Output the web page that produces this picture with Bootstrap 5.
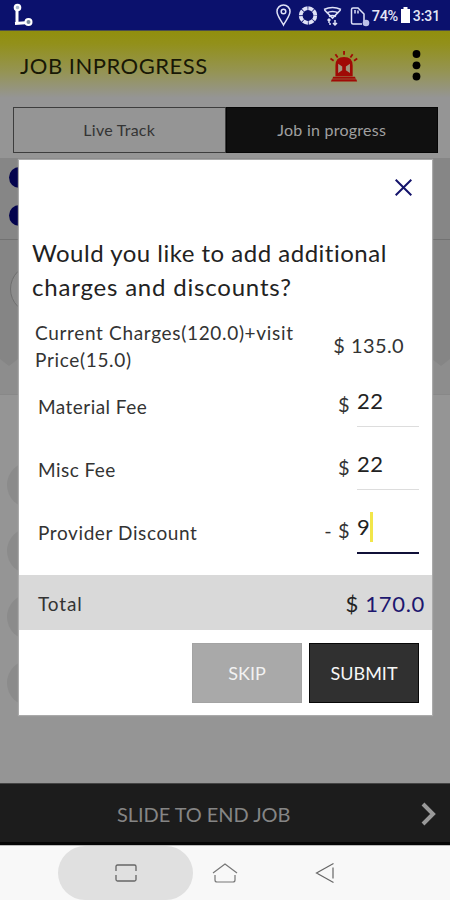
<!DOCTYPE html>
<html lang="en">
<head>
<meta charset="utf-8">
<meta name="viewport" content="width=device-width, initial-scale=1">
<title>Job in progress</title>
<link href="https://cdn.jsdelivr.net/npm/bootstrap@5.3.0/dist/css/bootstrap.min.css" rel="stylesheet">
<style>
body{font-family:Lato,"Open Sans",sans-serif;background:#959595;color:#222;width:450px;height:900px;overflow:hidden}
svg{display:block;flex:none}
.status{height:31px;background:#0b116d;border-bottom:1px solid #4b4d4c;font:500 14px/31px Roboto,sans-serif;color:#e4e6f6;padding:0 10px 0 11px}
.pct{width:29px;font-size:14.5px;letter-spacing:-.4px;padding-top:2px}
.clock{margin-left:3px;letter-spacing:-.1px;padding-top:2px}
.topbar{height:69px;background:linear-gradient(#918f0d 0,#92901a 18%,#959455 60%,#959595 97%);padding:0 29px 0 20px}
.page-title{font-size:22px;line-height:30px;color:#181806;letter-spacing:.5px;padding-top:1px}
.siren{margin:1px 53px 0 0}
.tabs{height:58px;padding:7px 12px 5px 13px}
.tab-item{height:46px;width:213px;border:1px solid #3d3d3d;font-size:16px;line-height:44px;text-align:center;color:#343434;letter-spacing:.25px}
.tab-item.on{background:#101010;border-color:#050505;color:#a0a0a0}
.strip{height:82px;background:#868686;border-bottom:1px solid #727272;padding:9px 0 0 9px;gap:17px}
.dot{width:21px;height:21px;border-radius:50%;background:#03034d}
.map-area{height:155px;background:#858585;border-bottom:1px solid #888}
.ring{width:50px;height:50px;border:1px solid #6f6f6f;border-radius:50%;background:#8c8c8c;margin:24px 0 0 10px}
.steps{height:388px;padding:67px 0 0 7px;gap:20px}
.step-dot{width:46px;height:46px;border-radius:50%;background:#8b8b8b}
.slide{height:62px;background:#1c1c1c;border-top:1px solid #444;border-bottom:3px solid #050505;color:#858585;font-size:20px;padding:2px 13px 0 117px}
.slide-text{letter-spacing:-.05px}
.navkeys{height:55px;background:#f8f8f8;padding-left:58px;border-top:1px solid #bbb}
.recent{width:135px;height:54px;border-radius:27px;background:#e0e0e0}
.home{margin-left:19px}
.back{margin-left:77px}
.sheet{position:absolute;left:19px;top:160px;width:413px;height:555px;background:#fff;box-shadow:0 0 1px 1px #aaa}
.sheet-head{height:73px;padding:19px 20px 0 0}
.question{font-size:24px;line-height:34px;padding:3px 0 0 13px;letter-spacing:.5px;color:#222;height:79px}
.q2{letter-spacing:.8px}
.lbl{font-size:19px;color:#333;letter-spacing:.45px}
.charge{height:63px;padding:5px 13px 0 19px}
.charge.first{height:64px;padding:7px 28px 0 16px;line-height:27px}
.charge.last{height:73px}
.charge>.lbl{padding-top:12px}
.charge.first>.lbl{padding-top:0}
.c1{letter-spacing:.67px}
.l3{letter-spacing:.6px}
.l4{letter-spacing:.9px;padding-top:1px}
.amt{font-size:20px;color:#333}
.a1{padding-top:13px;letter-spacing:.4px}
.cur{padding:8px 7px 0 0;letter-spacing:.5px}
.field{width:62px;height:47px;border-bottom:1px solid #ddd;font-size:22px;line-height:42px;color:#222;letter-spacing:.5px;margin-top:-1px}
.field.focus{height:48px;border-bottom:2px solid #101038}
.caret{width:3px;height:30px;background:#f2e64a;margin-top:6px}
.total{height:55px;background:#d9d9d9;padding:2px 7px 0 19px}
.sum{font-size:22px;letter-spacing:.7px;color:#222}
.navy{color:#1d176f}
.acts{padding:13px 13px 0 0;gap:7px}
.acts .btn{width:110px;height:60px;border-radius:0;font-size:18px;padding:0}
.skip{background:#a9a9a9!important;border:1px solid #a3a3a3;color:#f2f2f2!important}
.send{background:#303030!important;border:1px solid #080808;color:#f6f6f6!important}
</style>
<script src="https://cdn.jsdelivr.net/npm/bootstrap@5.3.0/dist/js/bootstrap.bundle.min.js"></script>
</head>
<body class="position-relative d-flex flex-column">
<div class="status d-flex align-items-center justify-content-between">
 <svg width="24" height="24" viewBox="0 0 24 24" fill="none" stroke="#fff"><path d="M6 5v15M4 20.500 18 19.500" stroke-width="3"/><circle cx="6.500" cy="4.500" r="2.800" fill="#abc" stroke-width="2"/><circle cx="17.500" cy="19" r="3" fill="#789" stroke-width="2"/></svg>
 <div class="d-flex align-items-center">
  <svg width="97" height="26" viewBox="0 0 97 26" fill="none" stroke="#dfe2f7" stroke-width="1.500"><path d="M8.500 23C6 18 2 14 2 9.500a6.500 6.500 0 0 1 13 0C15 14 11 18 8.500 23Z"/><circle cx="8.500" cy="9.500" r="2.300"/><circle cx="33" cy="13.500" r="7.300" stroke-width="3.800" stroke-dasharray="5 .75"/><path d="M49 7.500q8.500-4 17 0M51.500 11q6-3 12 0M54 14.500q3.500-2 7 0M49.500 8l8 8 8-8" stroke-width="1.600"/><path d="M54 17v4m-1.500-2.500L54 17l1.500 1.500M60 18v5m-2-2 2 2 2-2M54 22h2" stroke-width="1.500"/><path d="M89 19v-7l-6-6h-5q-1.500 0-1.500 1.500v13q0 1.500 1.500 1.500H87M80 8v3.500m3-3V11.500"/><circle cx="91" cy="21" r="3.300" fill="#bdc2e8" stroke="none"/></svg>
  <span class="pct">74%</span>
  <svg width="9" height="16" viewBox="0 0 9 16" fill="#fff"><path d="M2.500 0h4v2H9v14H0V2h2.500z"/></svg>
  <span class="clock">3:31</span>
 </div>
</div>
<header class="topbar d-flex align-items-center">
 <div class="page-title flex-grow-1">JOB INPROGRESS</div>
 <svg class="siren" width="29" height="32" viewBox="0 0 32 34" preserveAspectRatio="none" fill="#a00a05"><path d="M2 31h27l1 2.500H1zM3.500 28.500h24l1 2h-26zM6 28V16.500Q6 7.500 15.500 7.500T25 16.500V28z"/><path d="M9 14.500v10l4.500-3v-4zm13 0v10l-4.500-3v-4z" fill="#a1977e"/><path d="m.5 9 3.500 2.500M6 4.500 8.500 8M15.500 1v4M25 4.500 22.500 8M30 9l-3.500 2.500" stroke="#a00a05" stroke-width="2"/></svg>
 <svg width="9" height="31" viewBox="0 0 9 31"><circle cx="4.500" cy="4" r="3.900"/><circle cx="4.500" cy="15.300" r="3.900"/><circle cx="4.500" cy="26.500" r="3.900"/></svg>
</header>
<nav class="tabs d-flex"><div class="tab-item">Live Track</div><div class="tab-item on">Job in progress</div></nav>
<section class="strip d-flex flex-column"><span class="dot"></span><span class="dot"></span></section>
<section class="map-area d-flex flex-column justify-content-between"><span class="ring"></span>
 <svg width="450" height="35" viewBox="0 0 450 35"><path d="M0 0l9 7 9-7 9 7 9-7v35H0zM432 0l9 7 9-7v35h-30V9z" fill="#8d8d8d"/></svg>
</section>
<section class="steps d-flex flex-column"><span class="step-dot"></span><span class="step-dot"></span><span class="step-dot"></span><span class="step-dot"></span></section>
<footer>
 <div class="slide d-flex align-items-center justify-content-between"><span class="slide-text">SLIDE TO END JOB</span>
  <svg width="16" height="24" viewBox="0 0 16 24" fill="none" stroke="#999" stroke-width="4"><path d="m2 2 10 10L2 22"/></svg></div>
 <div class="navkeys d-flex align-items-center">
  <div class="recent d-flex align-items-center justify-content-center"><svg width="24" height="20" viewBox="0 0 24 20" fill="none" stroke="#666" stroke-width="1.300"><path d="M2 8V3.500Q2 2 3.500 2h17Q22 2 22 3.500V8M2 12v4.500Q2 18 3.500 18h17q1.500 0 1.500-1.500V12"/></svg></div>
  <svg class="home" width="26" height="22" viewBox="0 0 26 22" fill="none" stroke="#777" stroke-width="1.200"><path d="M1 11 13 2l12 9M3 13v5q0 2 2 2h16q2 0 2-2v-5"/></svg>
  <svg class="back" width="20" height="22" viewBox="0 0 20 22" fill="none" stroke="#666" stroke-width="1.200"><path d="M18.500 1.500 1.500 11l17 9.500M18 5.500v11"/></svg>
 </div>
</footer>
<main class="sheet">
 <div class="sheet-head d-flex justify-content-end"><svg width="17" height="17" viewBox="0 0 17 17" stroke="#14136b" stroke-width="2"><path d="m.7.7 15.600 15.600M16.300.7.7 16.300"/></svg></div>
 <div class="question"><span class="q1">Would you like to add additional</span><br><span class="q2">charges and discounts?</span></div>
 <div class="charge first d-flex justify-content-between"><div class="lbl"><span class="c1">Current Charges(120.0)+visit</span><br><span class="c1">Price(15.0)</span></div><div class="amt a1">$ 135.0</div></div>
 <div class="charge d-flex justify-content-between"><span class="lbl">Material Fee</span><div class="d-flex"><span class="amt cur">$</span><div class="field">22</div></div></div>
 <div class="charge d-flex justify-content-between"><span class="lbl">Misc Fee</span><div class="d-flex"><span class="amt cur">$</span><div class="field">22</div></div></div>
 <div class="charge last d-flex justify-content-between"><span class="lbl l3">Provider Discount</span><div class="d-flex"><span class="amt cur">- $</span><div class="field focus d-flex">9<span class="caret"></span></div></div></div>
 <div class="total d-flex align-items-center justify-content-between"><span class="lbl l4">Total</span><span class="sum">$ <span class="navy">170.0</span></span></div>
 <div class="acts d-flex justify-content-end"><button class="btn skip">SKIP</button><button class="btn send">SUBMIT</button></div>
</main>
</body>
</html>
